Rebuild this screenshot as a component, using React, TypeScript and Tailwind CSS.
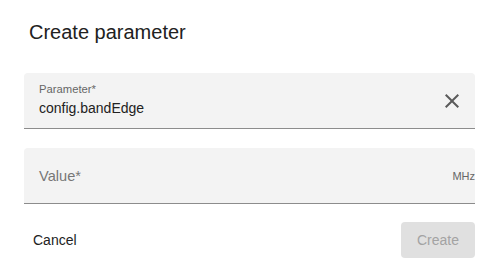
import React from 'react';

function CloseIcon() {
  return (
    <svg viewBox="0 0 24 24" className="h-6 w-6 fill-[#5a5a5a]" aria-hidden="true">
      <path d="M19 6.41 17.59 5 12 10.59 6.41 5 5 6.41 10.59 12 5 17.59 6.41 19 12 13.41 17.59 19 19 17.59 13.41 12z" />
    </svg>
  );
}

export default function App() {
  return (
    <div className="h-[275px] w-[495px] overflow-hidden bg-white font-['Liberation_Sans',Arial,sans-serif] text-[#212121]">
      <h2 className="pl-[29px] pt-[16px] text-[20px] font-normal leading-[32px]">Create parameter</h2>

      <div className="mt-[25px] pl-[24px] pr-[20px]">
        <div className="flex h-[56px] rounded-t-[4px] border-b border-[#8c8c8c] bg-[#f3f3f3] pl-[15px] pr-[11px]">
          <div className="flex flex-1 flex-col pt-[10px]">
            <span className="text-[11.25px] leading-[13px] text-[#666]">Parameter*</span>
            <span className="mt-[2px] text-[14px] leading-[20px] text-[#222]">config.bandEdge</span>
          </div>
          <button className="self-center">
            <CloseIcon />
          </button>
        </div>

        <div className="mt-[19px] flex h-[56px] items-center rounded-t-[4px] border-b border-[#8c8c8c] bg-[#f3f3f3] pl-[15px]">
          <span className="flex-1 text-[14.6px] leading-[20px] text-[#777]">Value*</span>
          <span className="text-[11px] leading-[14px] text-[#666]">MHz</span>
        </div>

        <div className="mt-[18px] flex items-center justify-between">
          <button className="h-[36px] px-[9px] text-[14px] text-[#222]">Cancel</button>
          <button className="h-[36px] w-[74px] rounded-[4px] bg-[#e0e0e0] text-[14px] text-[#a3a3a3]">Create</button>
        </div>
      </div>
    </div>
  );
}
